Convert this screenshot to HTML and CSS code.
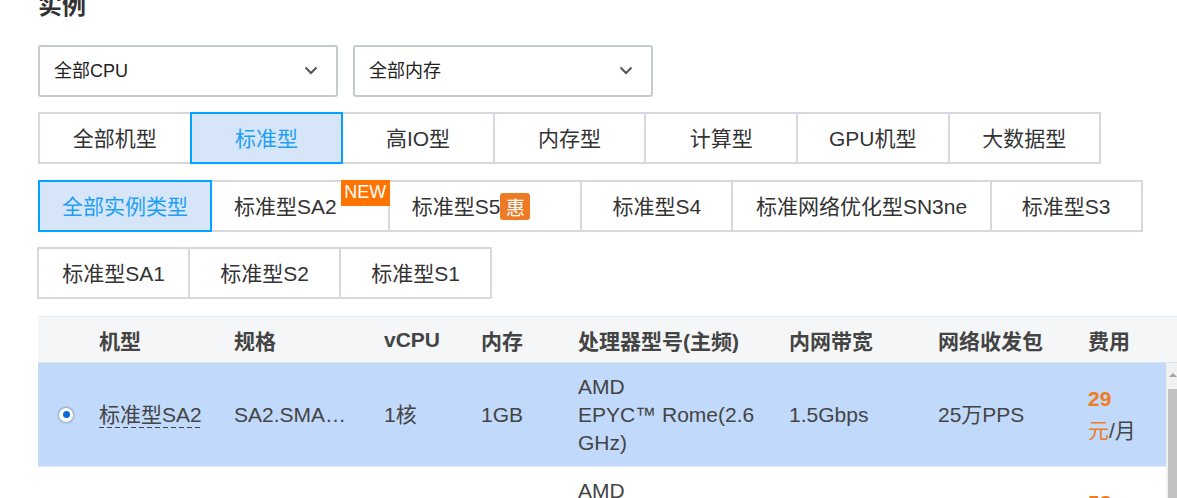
FILE: index.html
```html
<!DOCTYPE html>
<html lang="zh-CN">
<head>
<meta charset="utf-8">
<title>实例</title>
<link rel="stylesheet" href="styles.css">
</head>
<body>
<div class="page">
  <h2 class="title">实例</h2>

  <div class="selects">
    <div class="select">
      <span>全部CPU</span>
      <svg class="chev" width="14" height="9" viewBox="0 0 14 9"><path d="M1.5 1.5 L7 7 L12.5 1.5"/></svg>
    </div>
    <div class="select">
      <span>全部内存</span>
      <svg class="chev" width="14" height="9" viewBox="0 0 14 9"><path d="M1.5 1.5 L7 7 L12.5 1.5"/></svg>
    </div>
  </div>

  <div class="tabs tabs-family">
    <div class="tab">全部机型</div>
    <div class="tab is-active">标准型</div>
    <div class="tab">高IO型</div>
    <div class="tab">内存型</div>
    <div class="tab">计算型</div>
    <div class="tab">GPU机型</div>
    <div class="tab">大数据型</div>
  </div>

  <div class="tabs tabs-type">
    <div class="tab is-active">全部实例类型</div>
    <div class="tab tab-new">标准型SA2<span class="badge-new">NEW</span></div>
    <div class="tab tab-hui">标准型S5<span class="badge-hui">惠</span></div>
    <div class="tab">标准型S4</div>
    <div class="tab tab-wide">标准网络优化型SN3ne</div>
    <div class="tab">标准型S3</div>
  </div>

  <div class="tabs tabs-type tabs-row3">
    <div class="tab">标准型SA1</div>
    <div class="tab">标准型S2</div>
    <div class="tab">标准型S1</div>
  </div>

  <div class="table">
    <div class="thead">
      <div></div>
      <div>机型</div>
      <div>规格</div>
      <div>vCPU</div>
      <div>内存</div>
      <div>处理器型号(主频)</div>
      <div>内网带宽</div>
      <div>网络收发包</div>
      <div>费用</div>
    </div>
    <div class="tbody">
      <div class="rows">
        <div class="row is-selected">
          <div class="cell-radio"><span class="radio is-checked"></span></div>
          <div><span class="name">标准型SA2</span></div>
          <div><span class="spec">SA2.SMALL1</span></div>
          <div>1核</div>
          <div>1GB</div>
          <div>AMD<br>EPYC™ Rome(2.6<br>GHz)</div>
          <div>1.5Gbps</div>
          <div>25万PPS</div>
          <div class="price"><b>29</b><br><span class="unit">元</span>/月</div>
        </div>
        <div class="row">
          <div class="cell-radio"><span class="radio"></span></div>
          <div><span class="name">标准型SA2</span></div>
          <div><span class="spec">SA2.MEDIUM2</span></div>
          <div>1核</div>
          <div>2GB</div>
          <div>AMD<br>EPYC™ Rome(2.6<br>GHz)</div>
          <div>1.5Gbps</div>
          <div>25万PPS</div>
          <div class="price"><b>58</b><br><span class="unit">元</span>/月</div>
        </div>
      </div>
      <div class="scrollbar">
        <div class="sb-arrow"></div>
        <div class="sb-thumb"></div>
      </div>
    </div>
  </div>
</div>
</body>
</html>
```

FILE: styles.css
```css
html, body {
  margin: 0;
  padding: 0;
  overflow: hidden;
  background: #fff;
}

body {
  font-family: "Liberation Sans", "Noto Sans CJK SC", sans-serif;
  color: #333;
}

.page {
  padding-left: 38px;
  width: 1160px;
}

.title {
  margin: -9px 0 0 0;
  font-size: 24px;
  line-height: 30px;
  font-weight: bold;
  color: #333;
}

.selects {
  display: flex;
  gap: 15px;
  margin-top: 24px;
}

.select {
  width: 300px;
  height: 52px;
  box-sizing: border-box;
  border: 2px solid #c5c9d0;
  border-radius: 3px;
  padding: 0 18px 4px 14px;
  display: flex;
  align-items: center;
  justify-content: space-between;
  font-size: 18px;
  color: #222;
}

.chev {
  margin-top: 3px;
}

.chev path {
  fill: none;
  stroke: #555;
  stroke-width: 2;
}

.tabs {
  display: flex;
  margin-top: 15px;
}

.tabs-type {
  margin-top: 16px;
}

.tabs-row3 {
  margin-top: 15px;
  margin-left: -1px;
}

.tab {
  position: relative;
  height: 52px;
  box-sizing: border-box;
  border: 2px solid #d5d8de;
  margin-left: -2px;
  padding-bottom: 3px;
  display: flex;
  align-items: center;
  justify-content: center;
  font-size: 21px;
  color: #333;
  background: #fff;
  white-space: nowrap;
}

.tab:first-child {
  margin-left: 0;
}

.tabs-family .tab {
  width: 153.6px;
}

.tabs-type .tab {
  min-width: 153px;
  padding-left: 22px;
  padding-right: 22px;
}

.tabs-type .tab-wide {
  padding-left: 22.5px;
  padding-right: 22.5px;
}

.tab.is-active {
  border-color: #00a4ff;
  background: #d6e6f8;
  color: #1c9ff5;
  z-index: 1;
}

.tabs-type .tab-new {
  padding-right: 51px;
}

.badge-new {
  position: absolute;
  top: -2px;
  right: -2px;
  width: 49px;
  height: 26px;
  padding-bottom: 2px;
  box-sizing: border-box;
  background: #ff7300;
  color: #fff;
  font-size: 18px;
  display: flex;
  align-items: center;
  justify-content: center;
  z-index: 2;
}

.tabs-type .tab-hui {
  padding-right: 50px;
  justify-content: flex-start;
}

.badge-hui {
  display: inline-flex;
  align-items: center;
  justify-content: center;
  width: 30px;
  height: 27px;
  margin-top: 4px;
  border-radius: 3px;
  background: #ee7a26;
  color: #fff;
  font-size: 19px;
}

.table {
  margin-top: 17px;
  width: 1142px;
}

.thead,
.row {
  display: grid;
  grid-template-columns: 61px 135px 150px 97px 97px 211px 149px 150px 1fr;
  align-items: center;
}

.thead {
  height: 47px;
  box-sizing: border-box;
  background: #f4f6f8;
  border-top: 1px solid #e4e7eb;
  border-bottom: 1px solid #dde2e8;
  font-size: 21px;
  font-weight: bold;
  color: #444;
  width: 1160px;
}

.tbody {
  display: flex;
}

.rows {
  width: 1128px;
  flex: none;
}

.row {
  height: 104px;
  box-sizing: border-box;
  border-bottom: 1px solid #e3e7ec;
  font-size: 21px;
  line-height: 28px;
  color: #444;
  background: #fff;
}

.row.is-selected {
  background: #c1d9fa;
}

.cell-radio {
  padding-left: 21px;
  display: flex;
  align-items: center;
}

.radio {
  width: 14px;
  height: 14px;
  box-sizing: border-box;
  border-radius: 50%;
  background: #fff;
  box-shadow: 0 0 2px 1px rgba(0, 0, 0, 0.25);
  display: flex;
  align-items: center;
  justify-content: center;
}

.radio.is-checked::after {
  content: "";
  width: 7px;
  height: 7px;
  border-radius: 50%;
  background: #0b6bd9;
}

.name {
  display: inline-block;
  line-height: 24px;
  padding-bottom: 1px;
  background-image: repeating-linear-gradient(to right, #444 0, #444 5px, transparent 5px, transparent 8px);
  background-size: 100% 1px;
  background-repeat: no-repeat;
  background-position: left bottom;
}

.spec {
  display: block;
  width: 120px;
  overflow: hidden;
  white-space: nowrap;
  text-overflow: ellipsis;
}

.price {
  line-height: 32px;
}

.price b {
  color: #f07c22;
}

.price .unit {
  color: #f07c22;
}

.scrollbar {
  width: 14px;
  flex: none;
  background: #f1f1f1;
  position: relative;
}

.sb-arrow {
  height: 24px;
  display: flex;
  justify-content: center;
  padding-top: 10px;
  box-sizing: border-box;
}

.sb-arrow::before {
  content: "";
  width: 0;
  height: 0;
  border-left: 4px solid transparent;
  border-right: 4px solid transparent;
  border-bottom: 4px solid #a3a3a3;
}

.sb-thumb {
  margin: 2px 0 0 2px;
  height: 300px;
  background: #c1c1c1;
}
```
